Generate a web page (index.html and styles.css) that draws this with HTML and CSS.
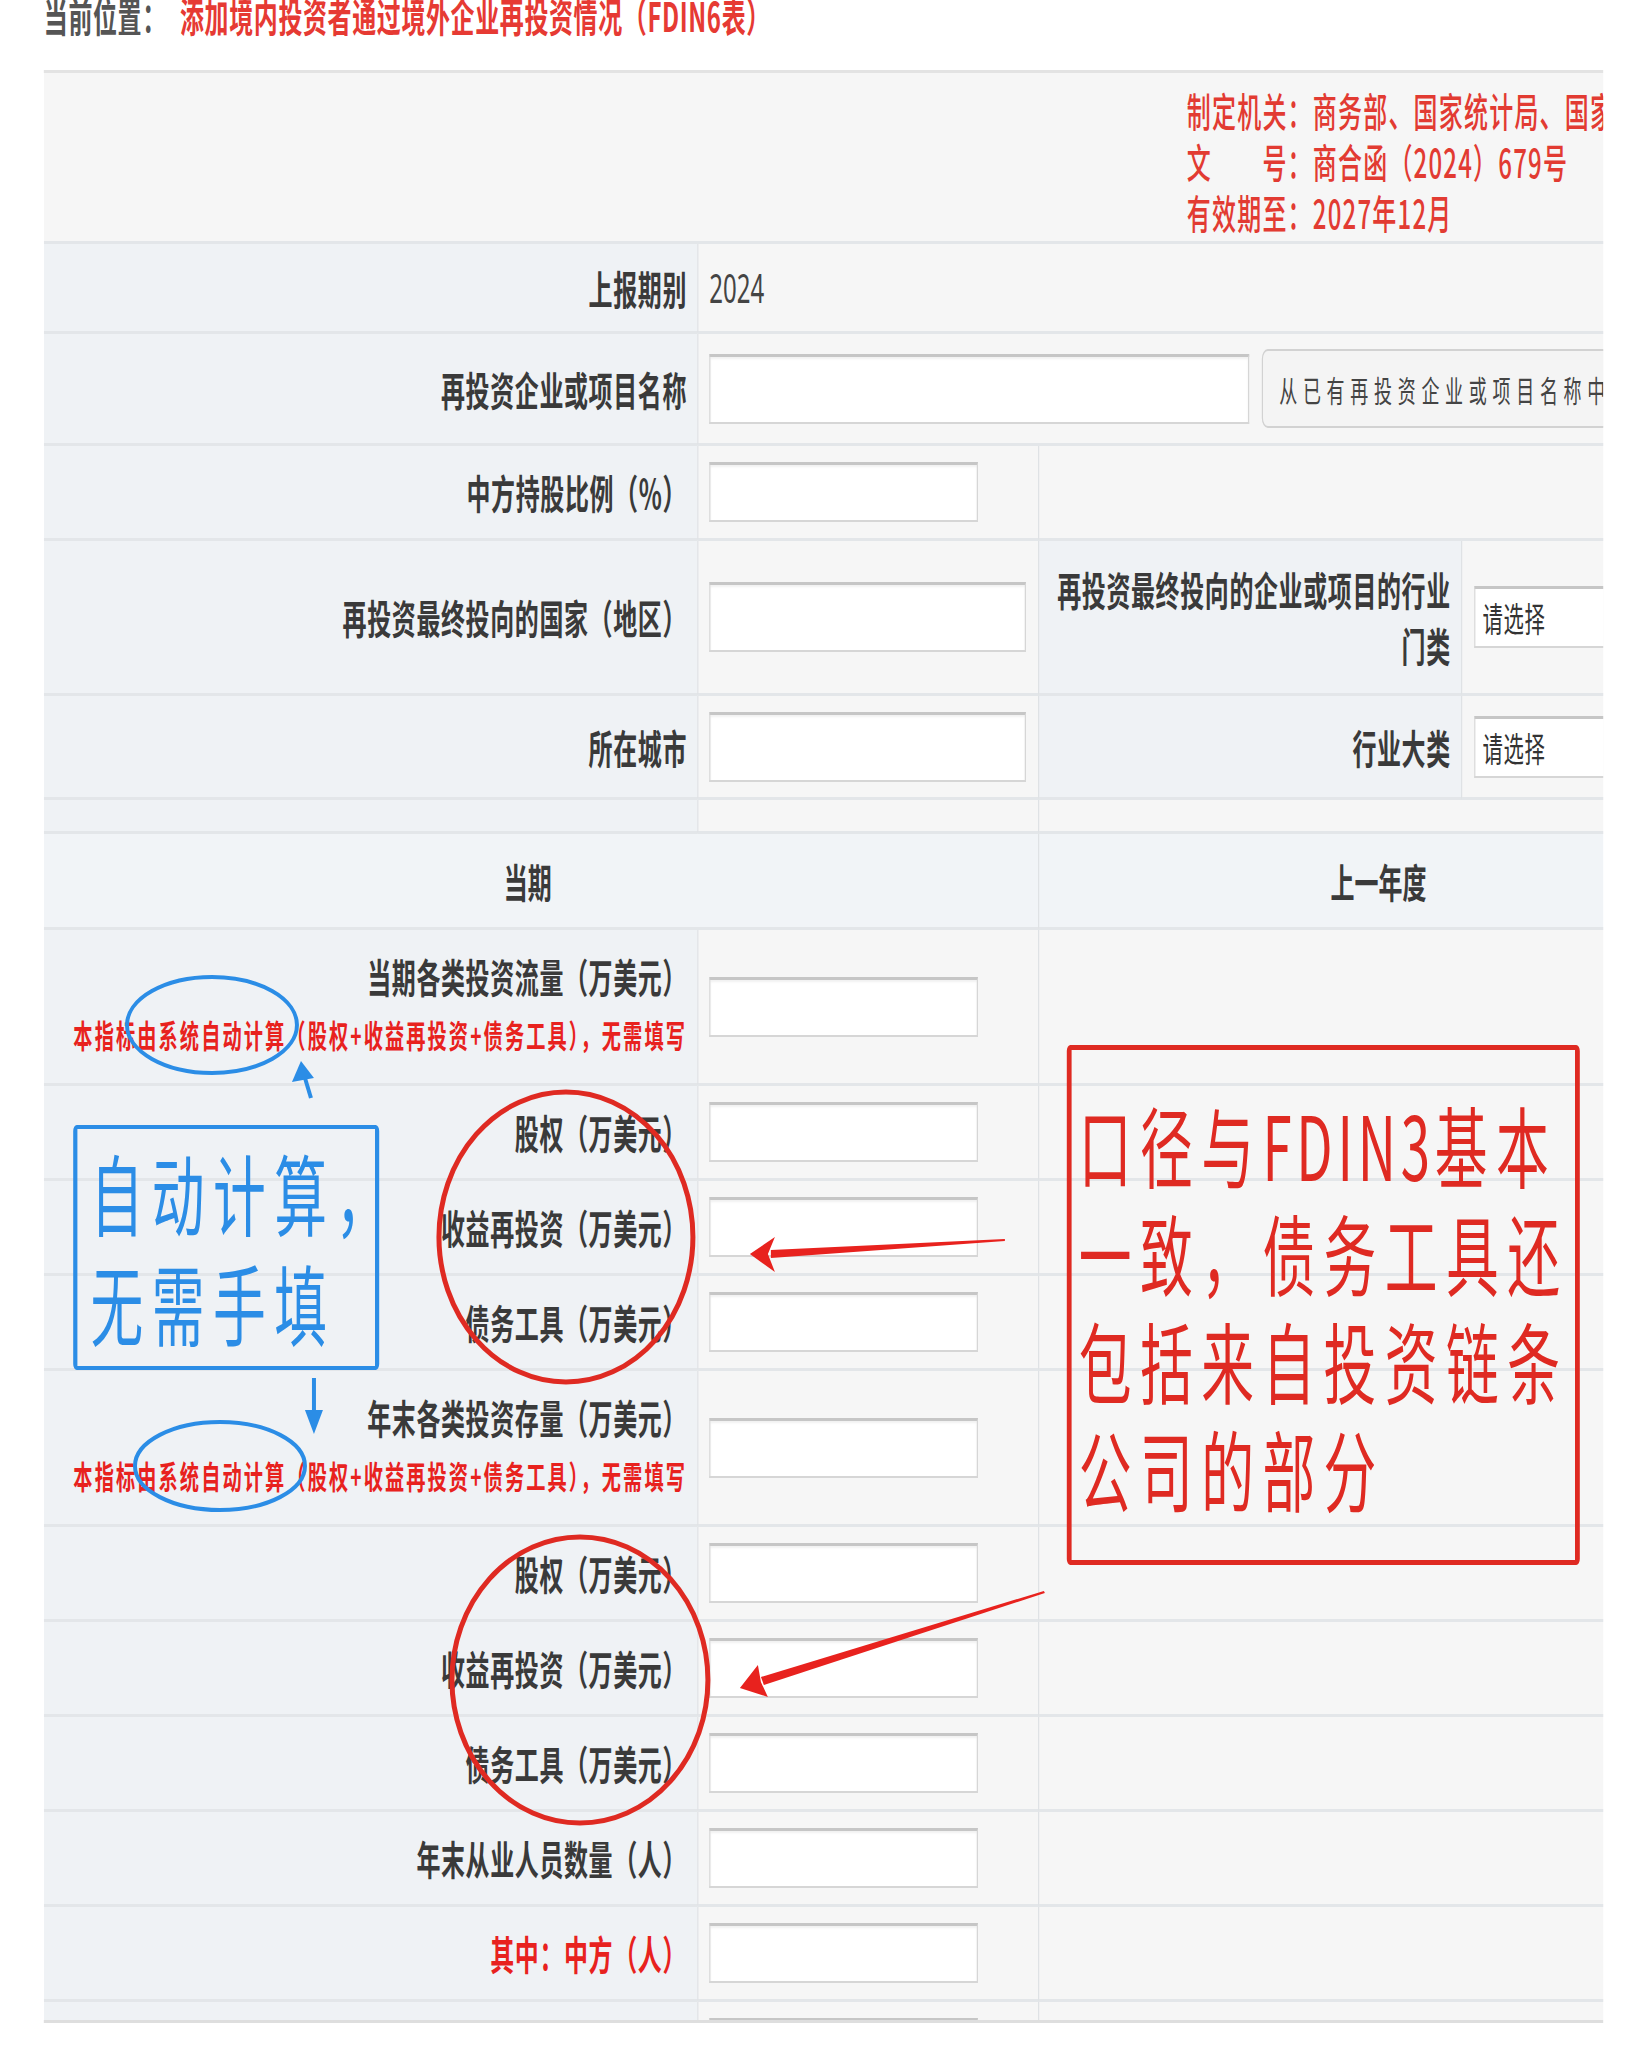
FILE: index.html
```html
<!DOCTYPE html>
<html lang="zh-CN">
  <head>
    <meta charset="UTF-8">
    <title>添加境内投资者通过境外企业再投资情况</title>

    <link rel="stylesheet" href="styles.css">
  </head>
  <body>
    <div class="sheet">
      <p class="crumb">当前位置：<span class="crumb-title">添加境内投资者通过境外企业再投资情况（FDIN6表）</span></p>

      <div class="frame">
        <table class="form">
          <colgroup>
            <col class="c-label">
            <col class="c-value">
            <col class="c-label2">
            <col class="c-pick">
          </colgroup>

          <tr class="r-issuer">
            <td colspan="4" class="issuer">
              <div class="issuer-text">制定机关：商务部、国家统计局、国家外汇管理局<br>文　　号：商合函（2024）679号<br>有效期至：2027年12月</div>
            </td>
          </tr>
          <tr class="r-short">
            <th class="label">上报期别</th>
            <td colspan="3" class="value year">2024</td>
          </tr>
          <tr class="r-wide">
            <th class="label">再投资企业或项目名称</th>
            <td colspan="3" class="value">
              <div class="name-line">
                <input class="field field-wide" type="text">
                <button class="pick-btn" type="button">从已有再投资企业或项目名称中选择</button>
              </div>
            </td>
          </tr>
          <tr>
            <th class="label">中方持股比例（%）</th>
            <td class="value"><input class="field" type="text"></td>
            <td colspan="2" class="value"></td>
          </tr>
          <tr class="r-double">
            <th class="label">再投资最终投向的国家（地区）</th>
            <td class="value"><input class="field field-mid" type="text"></td>
            <th class="label label-side">再投资最终投向的企业或项目的行业门类</th>
            <td class="value pick-cell">
              <select class="pick"><option>请选择</option></select>
            </td>
          </tr>
          <tr class="r-city">
            <th class="label">所在城市</th>
            <td class="value"><input class="field field-mid" type="text"></td>
            <th class="label label-side">行业大类</th>
            <td class="value pick-cell">
              <select class="pick"><option>请选择</option></select>
            </td>
          </tr>
          <tr class="r-gap">
            <th class="label"></th>
            <td class="value"></td>
            <td colspan="2" class="value"></td>
          </tr>
          <tr class="r-head">
            <th colspan="2" class="head head-first">当期</th>
            <th colspan="2" class="head head-last">上一年度</th>
          </tr>

          <tr class="r-sum">
            <th class="label label-sum">当期各类投资流量（万美元）<span class="note">本指标由系统自动计算（股权+收益再投资+债务工具），无需填写</span></th>
            <td class="value"><input class="field" type="text"></td>
            <td colspan="2" class="value"></td>
          </tr>
          <tr>
            <th class="label">股权（万美元）</th>
            <td class="value"><input class="field" type="text"></td>
            <td colspan="2" class="value"></td>
          </tr>
          <tr>
            <th class="label">收益再投资（万美元）</th>
            <td class="value"><input class="field" type="text"></td>
            <td colspan="2" class="value"></td>
          </tr>
          <tr>
            <th class="label">债务工具（万美元）</th>
            <td class="value"><input class="field" type="text"></td>
            <td colspan="2" class="value"></td>
          </tr>

          <tr class="r-sum">
            <th class="label label-sum">年末各类投资存量（万美元）<span class="note">本指标由系统自动计算（股权+收益再投资+债务工具），无需填写</span></th>
            <td class="value"><input class="field" type="text"></td>
            <td colspan="2" class="value"></td>
          </tr>
          <tr>
            <th class="label">股权（万美元）</th>
            <td class="value"><input class="field" type="text"></td>
            <td colspan="2" class="value"></td>
          </tr>
          <tr>
            <th class="label">收益再投资（万美元）</th>
            <td class="value"><input class="field" type="text"></td>
            <td colspan="2" class="value"></td>
          </tr>
          <tr>
            <th class="label">债务工具（万美元）</th>
            <td class="value"><input class="field" type="text"></td>
            <td colspan="2" class="value"></td>
          </tr>

          <tr>
            <th class="label">年末从业人员数量（人）</th>
            <td class="value"><input class="field" type="text"></td>
            <td colspan="2" class="value"></td>
          </tr>
          <tr>
            <th class="label label-red">其中：中方（人）</th>
            <td class="value"><input class="field" type="text"></td>
            <td colspan="2" class="value"></td>
          </tr>
          <tr>
            <th class="label"></th>
            <td class="value"><input class="field" type="text"></td>
            <td colspan="2" class="value"></td>
          </tr>
        </table>
      </div>

      <div class="callout callout-auto">自动计算，<br>无需手填</div>
      <div class="callout callout-scope">口径与<span class="latin">FDIN3</span>基本<br>一致，债务工具还<br>包括来自投资链条<br>公司的部分</div>

      <svg class="marks" viewBox="0 0 1637 2068" preserveAspectRatio="none">
        <g class="ring-blue">
          <ellipse cx="212" cy="1025" rx="85" ry="48"/>
          <ellipse cx="220" cy="1466" rx="85" ry="44"/>
        </g>
        <g class="ring-red">
          <ellipse cx="566" cy="1237" rx="127" ry="145"/>
          <ellipse cx="580" cy="1680" rx="128" ry="143"/>
        </g>
        <g class="arrow-blue">
          <line x1="311" y1="1098" x2="305" y2="1078"/>
          <polygon points="301,1061 292,1082 314,1078"/>
          <line x1="314" y1="1378" x2="314" y2="1414"/>
          <polygon points="314,1434 305,1410 323,1410"/>
        </g>
        <g class="arrow-red">
          <polygon points="1005,1239 1005,1241 771,1258 771,1250"/>
          <polygon points="750,1254 775,1237 768,1254 775,1272"/>
          <polygon points="1044,1591 1045,1593 764,1685 761,1677"/>
          <polygon points="740,1688 758,1665 761,1682 768,1697"/>
        </g>
      </svg>
    </div>
  </body>
</html>
```

FILE: styles.css
```css
html,
body {
  background: #fff;
  margin: 0;
  overflow: hidden;
}

body {
  color: #3a3a3a;
  font-family: "Noto Sans CJK SC", "Noto Sans", sans-serif;
}

.sheet {
  height: 2068px;
  position: relative;
  transform: scaleX(0.6);
  transform-origin: 0 0;
  width: 2728px;
}

.crumb {
  color: #555;
  font-size: 40px;
  font-weight: bold;
  height: 70px;
  letter-spacing: 1px;
  line-height: 30px;
  margin: 0;
  padding-left: 73px;
  white-space: nowrap;
}

.crumb-title {
  color: #e63a33;
  margin-left: 22px;
}

.frame {
  border-bottom: 3px solid #dedede;
  border-top: 3px solid #e3e3e3;
  box-sizing: border-box;
  height: 1953px;
  margin-left: 73px;
  overflow: hidden;
  width: 2599px;
}

.form {
  border-collapse: separate;
  border-spacing: 0;
  table-layout: fixed;
  width: 2790px;
}

.c-label { width: 1089px; }
.c-value { width: 568px; }
.c-label2 { width: 705px; }
.c-pick { width: 428px; }

.form tr { height: 95px; }
.form tr.r-issuer { height: 171px; }
.form tr.r-short { height: 90px; }
.form tr.r-wide { height: 112px; }
.form tr.r-double { height: 155px; }
.form tr.r-city { height: 104px; }
.form tr.r-gap { height: 34px; }
.form tr.r-head { height: 96px; }
.form tr.r-sum { height: 156px; }

.form th,
.form td {
  border-bottom: 3px solid #e3e6e9;
  box-sizing: border-box;
  padding: 0;
  vertical-align: middle;
}

.issuer {
  background: #f6f6f6;
  vertical-align: top !important;
}

.issuer-text {
  color: #e23b32;
  font-size: 40px;
  font-weight: 500;
  letter-spacing: 2px;
  line-height: 51px;
  margin-left: 1905px;
  padding-top: 12px;
  white-space: nowrap;
}

.label {
  background: #eff2f5;
  color: #3a3a3a;
  font-size: 40px;
  font-weight: bold;
  letter-spacing: 1px;
  line-height: 56px;
  padding-right: 17px !important;
  text-align: right;
}

.label-side {
  border-left: 2px solid #dfe2e5;
  padding-left: 28px !important;
}

.label-sum {
  padding-bottom: 12px !important;
}

.label-red {
  color: #e8221e;
}

.note {
  color: #e8221e;
  display: block;
  font-size: 32px;
  letter-spacing: 3.5px;
  line-height: 40px;
  margin-top: 10px;
  white-space: nowrap;
}

.value {
  background: #f6f6f6;
  border-left: 2px solid #dfe2e5;
  padding-left: 18px !important;
}

.year {
  color: #444;
  font-family: "Noto Sans", sans-serif;
  font-size: 40px;
}

.head {
  background: #f1f4f7;
  color: #3a3a3a;
  font-size: 40px;
  font-weight: bold;
  text-align: center;
}

.head-first {
  padding-right: 44px !important;
}

.head-last {
  border-left: 2px solid #dfe2e5;
}

.field {
  background: #fff;
  border: 2px solid #d6d6d6;
  border-top: 3px solid #c6c6c6;
  box-shadow: inset 0 2px 3px rgba(0, 0, 0, 0.06);
  box-sizing: border-box;
  display: block;
  height: 60px;
  margin: 0;
  width: 448px;
}

.field-mid {
  height: 70px;
  width: 528px;
}

.field-wide {
  height: 70px;
  width: 902px;
}

.name-line {
  align-items: center;
  display: flex;
  gap: 21px;
}

.pick-btn {
  background: #f4f4f4;
  border: 2px solid #d2d2d2;
  border-radius: 10px;
  box-sizing: border-box;
  color: #444;
  flex: none;
  font-family: inherit;
  font-size: 30px;
  height: 79px;
  letter-spacing: 9.5px;
  padding: 0 0 0 27px;
  text-align: left;
  white-space: nowrap;
  width: 760px;
}

.pick-cell {
  padding-left: 20px !important;
}

.pick {
  -webkit-appearance: none;
  appearance: none;
  background: #fff;
  border: 2px solid #d6d6d6;
  border-top: 3px solid #c6c6c6;
  border-radius: 0;
  box-sizing: border-box;
  color: #333;
  display: block;
  font-family: inherit;
  font-size: 34px;
  height: 62px;
  letter-spacing: 1px;
  padding: 0 0 0 12px;
  width: 408px;
}

/* hand-drawn notes on top of the form */
.callout {
  box-sizing: border-box;
  font-size: 88px;
  font-weight: normal;
  letter-spacing: 14px;
  position: absolute;
  white-space: nowrap;
}

.callout .latin {
  letter-spacing: 8px;
}

.callout-auto {
  border: 4px solid #2b8de6;
  border-left-width: 7px;
  border-radius: 6px;
  border-right-width: 7px;
  color: #2b8de6;
  height: 245px;
  left: 122px;
  line-height: 110px;
  padding: 7px 0 0 22px;
  top: 1125px;
  width: 510px;
}

.callout-scope {
  border: 5px solid #df2a22;
  border-left-width: 8px;
  border-radius: 6px;
  border-right-width: 8px;
  color: #df2a22;
  height: 520px;
  left: 1778px;
  line-height: 108px;
  padding: 39px 0 0 12px;
  top: 1045px;
  width: 855px;
}

.marks {
  height: 2068px;
  left: 0;
  pointer-events: none;
  position: absolute;
  top: 0;
  width: 2728px;
}

.ring-blue {
  fill: none;
  stroke: #2b8de6;
  stroke-width: 4;
}

.ring-red {
  fill: none;
  stroke: #df2a22;
  stroke-width: 5;
}

.arrow-blue line {
  stroke: #2b8de6;
  stroke-width: 4;
}

.arrow-blue polygon {
  fill: #2b8de6;
}

.arrow-red polygon {
  fill: #e8221e;
}
```
